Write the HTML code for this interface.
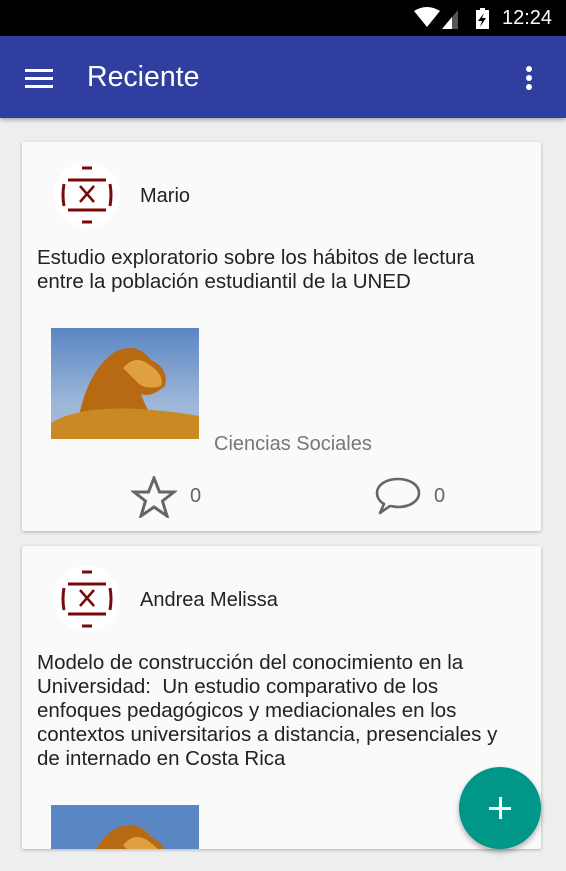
<!DOCTYPE html>
<html><head><meta charset="utf-8"><style>
*{margin:0;padding:0;box-sizing:border-box}
html,body{width:566px;height:871px;overflow:hidden}
body{background:#eeeeee;font-family:"Liberation Sans",Roboto,sans-serif;position:relative}
.sb{position:absolute;left:0;top:0;width:566px;height:36px;background:#000;color:#fff}
.tb{position:absolute;left:0;top:36px;width:566px;height:82px;background:#303f9f;box-shadow:0 2px 4px rgba(0,0,0,.3)}
.card{position:absolute;left:22px;width:519px;background:#fafafa;border-radius:2px;box-shadow:0 1px 3px rgba(0,0,0,.25)}
.av{position:absolute;width:66px;height:66px;border-radius:50%;background:#fff}
.name{position:absolute;left:118px;font-size:20px;color:#222}
.title{position:absolute;left:15px;width:500px;font-size:20.5px;line-height:24px;color:#222;white-space:nowrap}
.pic{position:absolute;left:29px;width:148px;height:111px;overflow:hidden}
</style></head><body>
<div class="sb">
<svg style="position:absolute;left:412px;top:7px" width="90" height="24" viewBox="0 0 90 24">
<path d="M2 4 Q15 -4 28 4 L15 20 Z" fill="#fff"/>
<path d="M46 3 L46 22 L30 22 Z" fill="#555"/><path d="M40 10 L40 22 L30 22 Z" fill="#fff"/>
<rect x="64" y="3" width="13" height="19" fill="#fff"/><rect x="68" y="1" width="5" height="3" fill="#fff"/>
<path d="M72 6 L66 14 L70 14 L68 20 L74 11 L70 11 Z" fill="#000"/>
</svg>
<div style="position:absolute;left:502px;top:7px;font-size:20px">12:24</div>
</div>
<div class="tb">
<div style="position:absolute;left:25px;top:33px;width:28px;height:3px;background:#fff;box-shadow:0 8px 0 #fff,0 16px 0 #fff"></div>
<div style="position:absolute;left:87px;top:25px;font-size:28.5px;color:#fff">Reciente</div>
<div style="position:absolute;left:526px;top:30px;width:6px;height:6px;border-radius:50%;background:#fff;box-shadow:0 9px 0 #fff,0 18px 0 #fff"></div>
</div>

<div class="card" style="top:142px;height:389px">
<div class="av" style="left:32px;top:20px"><svg width="66" height="66" viewBox="0 0 66 66"><g fill="none" stroke="#7a0a0a" stroke-width="3"><path d="M10 22 Q8 33 10 44"/><path d="M56 22 Q58 33 56 44"/><path d="M14 18 H52"/><path d="M14 48 H52"/><path d="M28 6 H38"/><path d="M28 60 H38"/><path d="M26 24 L40 40 M40 24 L26 40" stroke-width="2.5"/></g></svg></div>
<div class="name" style="top:43px">Mario</div>
<div class="title" style="top:104px">Estudio exploratorio sobre los hábitos de lectura<br>entre la población estudiantil de la UNED</div>
<div class="pic" style="top:186px"><svg width="148" height="111"><defs><linearGradient id="s" x1="0" y1="0" x2="0" y2="1"><stop offset="0" stop-color="#5b86c4"/><stop offset=".7" stop-color="#9fb8d8"/></linearGradient></defs><rect width="148" height="111" fill="url(#s)"/><path d="M25 111 Q30 50 62 25 Q85 12 100 32 Q118 40 114 58 Q100 70 90 66 Q98 90 120 111 Z" fill="#b86a12"/><path d="M72 40 Q85 25 100 38 Q114 48 110 58 Q96 62 88 56 Z" fill="#e0a040"/><path d="M0 95 Q40 70 148 88 L148 111 L0 111 Z" fill="#c98a25"/></svg></div>
<div style="position:absolute;left:192px;top:291px;font-size:20px;color:#777">Ciencias Sociales</div>
<svg style="position:absolute;left:109px;top:334px" width="46" height="42" viewBox="0 0 46 42"><path d="M23 2 L28.5 16 L43 16 L31.5 25 L36 40 L23 31 L10 40 L14.5 25 L3 16 L17.5 16 Z" fill="none" stroke="#666" stroke-width="3"/></svg>
<div style="position:absolute;left:168px;top:343px;font-size:20px;color:#666">0</div>
<svg style="position:absolute;left:353px;top:334px" width="46" height="40" viewBox="0 0 46 40"><path d="M23 3 C35 3 44 9 44 17 C44 25 35 31 23 31 C20 31 17 30 15 30 L5 37 L9 28 C4 25 2 21 2 17 C2 9 11 3 23 3 Z" fill="none" stroke="#666" stroke-width="2.6" stroke-linejoin="round"/></svg>
<div style="position:absolute;left:412px;top:343px;font-size:20px;color:#666">0</div>
</div>

<div class="card" style="top:546px;height:303px;overflow:hidden">
<div class="av" style="left:32px;top:20px"><svg width="66" height="66" viewBox="0 0 66 66"><g fill="none" stroke="#7a0a0a" stroke-width="3"><path d="M10 22 Q8 33 10 44"/><path d="M56 22 Q58 33 56 44"/><path d="M14 18 H52"/><path d="M14 48 H52"/><path d="M28 6 H38"/><path d="M28 60 H38"/><path d="M26 24 L40 40 M40 24 L26 40" stroke-width="2.5"/></g></svg></div>
<div class="name" style="top:43px">Andrea Melissa</div>
<div class="title" style="top:105px">Modelo de construcción del conocimiento en la<br>Universidad:&nbsp; Un estudio comparativo de los<br>enfoques pedagógicos y mediacionales en los<br>contextos universitarios a distancia, presenciales y<br>de internado en Costa Rica</div>
<div class="pic" style="top:259px"><svg width="148" height="111"><rect width="148" height="111" fill="#5b86c4"/><path d="M25 111 Q30 50 62 25 Q85 12 100 32 Q118 40 114 58 Q100 70 90 66 Q98 90 120 111 Z" fill="#b86a12"/><path d="M72 40 Q85 25 100 38 Q114 48 110 58 Q96 62 88 56 Z" fill="#e0a040"/></svg></div>
</div>

<div style="position:absolute;left:459px;top:767px;width:82px;height:82px;border-radius:50%;background:#009688;box-shadow:0 3px 6px rgba(0,0,0,.3)">
<div style="position:absolute;left:30px;top:40px;width:22px;height:3px;background:#fff"></div>
<div style="position:absolute;left:39.5px;top:30px;width:3px;height:22px;background:#fff"></div>
</div>
</body></html>
